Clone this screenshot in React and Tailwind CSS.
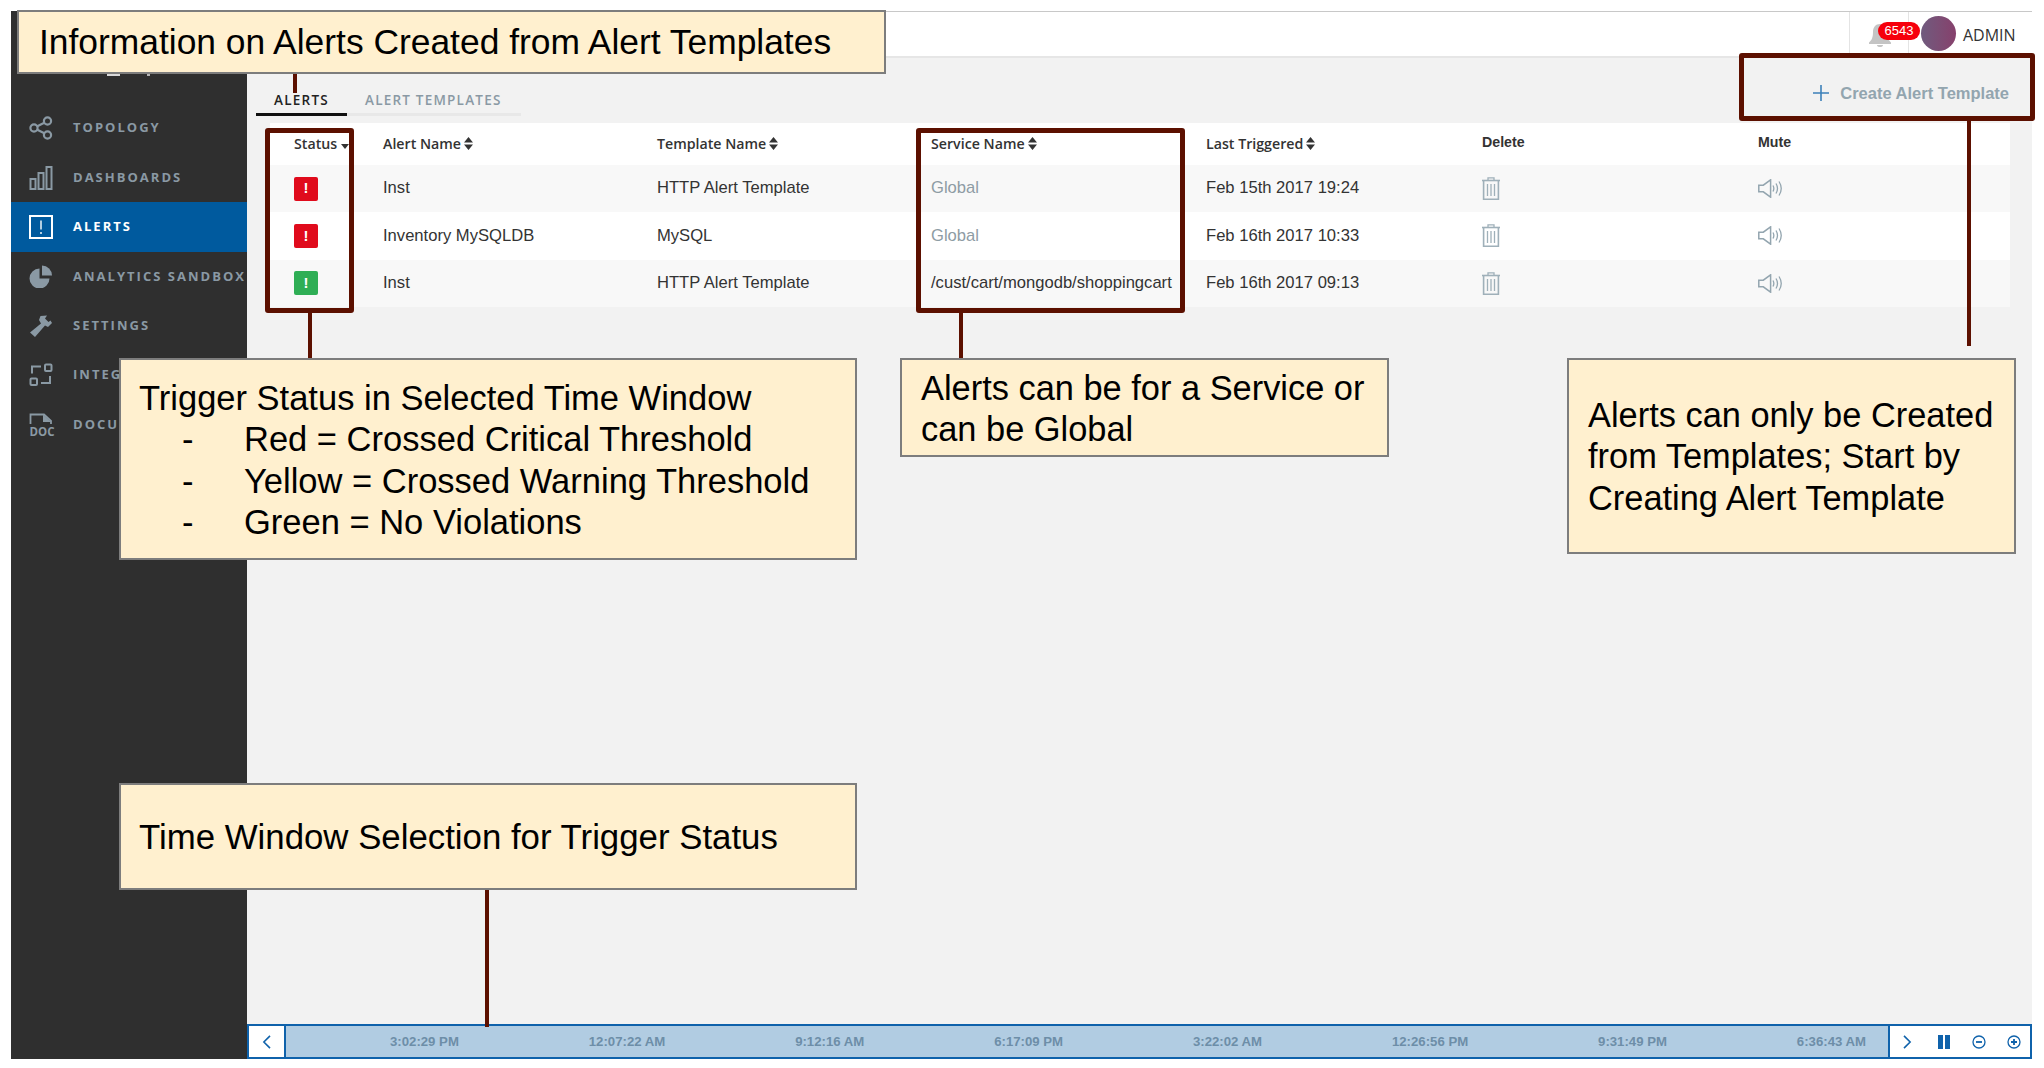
const helv = "font-['Liberation_Sans',Arial,sans-serif]";
const open = "font-['Open_Sans',sans-serif]";

const TopologyIcon = () => (
  <svg viewBox="0 0 24 24" className="h-6 w-6" fill="none" stroke="currentColor" strokeWidth="2.2">
    <circle cx="5" cy="12" r="3.6" />
    <circle cx="18.5" cy="5" r="3.6" />
    <circle cx="18.5" cy="19" r="3.6" />
    <path d="M8.3 10.3 15.3 6.7M8.3 13.7l7 3.6" />
  </svg>
);
const BarsIcon = () => (
  <svg viewBox="0 0 24 24" className="h-6 w-6" fill="none" stroke="currentColor" strokeWidth="2">
    <rect x="1.5" y="13" width="5" height="10" />
    <rect x="9.5" y="7" width="5" height="16" />
    <rect x="17.5" y="1" width="5" height="22" />
  </svg>
);
const AlertSquareIcon = () => (
  <svg viewBox="0 0 24 24" className="h-6 w-6" fill="none" stroke="currentColor">
    <rect x="1" y="1" width="22" height="22" strokeWidth="2" />
    <path d="M12 5.5v9M12 17v2" strokeWidth="1.4" />
  </svg>
);
const PieIcon = () => (
  <svg viewBox="0 0 24 24" className="h-6 w-6" fill="currentColor">
    <path d="M10.5 4.5v10h10a10 10 0 1 1-10-10z" />
    <path d="M13 1.5a10 10 0 0 1 10 10H13z" />
  </svg>
);
const WrenchIcon = () => (
  <svg viewBox="0 0 24 24" className="h-6 w-6" fill="currentColor">
    <path d="M11.5 2 18 1.5l-2 3 3.5 3.5 2-1.5L23 9l-4 4-3-1.5-10 11.5-5-4.5L12 9.5 10 6z" />
  </svg>
);
const IntegrationsIcon = () => (
  <svg viewBox="0 0 24 24" className="h-6 w-6" fill="none" stroke="currentColor" strokeWidth="2">
    <rect x="16" y="1.5" width="6.5" height="6.5" rx="1" />
    <rect x="1.5" y="15.5" width="6.5" height="6.5" rx="1" />
    <path d="M12 3.5H3v7M12 20h9v-7" />
  </svg>
);
const DocIcon = () => (
  <svg viewBox="0 0 24 24" className="h-6 w-6 overflow-visible" fill="none" stroke="currentColor">
    <path d="M1.5 11V1.500H15L22 8v3" strokeWidth="1.8" />
    <path d="M14 1.500 22 9h-8z" fill="currentColor" stroke="none" />
    <text x="0.5" y="23" fontSize="11.5" fontWeight="700" fill="currentColor" stroke="none" fontFamily="'Open Sans',sans-serif">DOC</text>
  </svg>
);

const navItems = [
  { label: 'TOPOLOGY', icon: TopologyIcon },
  { label: 'DASHBOARDS', icon: BarsIcon },
  { label: 'ALERTS', icon: AlertSquareIcon, active: true },
  { label: 'ANALYTICS SANDBOX', icon: PieIcon },
  { label: 'SETTINGS', icon: WrenchIcon },
  { label: 'INTEG', icon: IntegrationsIcon },
  { label: 'DOCU', icon: DocIcon },
];

const rows = [
  { color: 'bg-[#e00b1c]', name: 'Inst', template: 'HTTP Alert Template', service: 'Global', muted: true, time: 'Feb 15th 2017 19:24', bg: 'bg-[#f8f8f8]' },
  { color: 'bg-[#e00b1c]', name: 'Inventory MySQLDB', template: 'MySQL', service: 'Global', muted: true, time: 'Feb 16th 2017 10:33', bg: 'bg-white' },
  { color: 'bg-[#2fae55]', name: 'Inst', template: 'HTTP Alert Template', service: '/cust/cart/mongodb/shoppingcart', time: 'Feb 16th 2017 09:13', bg: 'bg-[#f8f8f8]' },
];

const times = ['3:02:29 PM', '12:07:22 AM', '9:12:16 AM', '6:17:09 PM', '3:22:02 AM', '12:26:56 PM', '9:31:49 PM', '6:36:43 AM'];

const columns = 'grid grid-cols-[89px_274px_274px_275px_276px_276px_1fr] items-center pl-[24px]';

const SortIcon = () => (
  <svg viewBox="0 0 9 13" className="ml-[3px] inline-block h-[13px] w-[9px] text-[#333]" fill="currentColor">
    <path d="M4.500 0 9 5.500H0zM4.500 13 0 7.500h9z" />
  </svg>
);

const TrashIcon = () => (
  <svg viewBox="0 0 18 23" className="h-[23px] w-[18px] text-[#9fb0b9]" fill="none" stroke="currentColor" strokeWidth="1.3">
    <path d="M0 3.500h18" strokeWidth="1.6" />
    <path d="M6 3V.8h6V3" />
    <path d="M1.600 3.500v18.700h14.800V3.500" strokeWidth="1.6" />
    <path d="M5.500 7v12M9 7v12M12.500 7v12" />
  </svg>
);

const SpeakerIcon = () => (
  <svg viewBox="0 0 24 19" className="h-[19px] w-[24px] text-[#93a5af]" fill="none" stroke="currentColor" strokeWidth="1.5">
    <path d="M.8 6.200h4.500L12.600.8v17.400l-7.300-5.400H.8z" />
    <path d="M15 6.500c1 1.800 1 4.200 0 6M18 4.500c1.800 3 1.800 7 0 10M21 2.500c2.700 4.200 2.700 9.800 0 14" strokeWidth="1.3" />
  </svg>
);

const callout = `absolute border-2 border-[#7d7d7d] bg-[#fff0cf] text-black ${helv}`;
const marker = 'absolute border-[5px] border-[#5c1000] rounded-[3px]';
const leader = 'absolute w-[4px] bg-[#5c1000]';

export default function App() {
  return (
    <div className={`relative h-[1068px] w-[2044px] overflow-hidden bg-white ${helv}`}>
      <div className="flex h-[1059px] w-[2032px] pl-[11px] pt-[11px]">
        {/* Sidebar */}
        <aside className={`w-[236px] shrink-0 bg-[#2f2f2f] pt-[92.500px] ${open}`}>
          {navItems.map((item) => (
            <div
              key={item.label}
              className={`flex h-[49.400px] items-center overflow-hidden whitespace-nowrap pl-[18px] ${item.active ? 'bg-[#005a9e] text-white' : 'text-[#8a99a4]'}`}
            >
              <item.icon />
              <span className="ml-[20px] text-[13px] font-bold tracking-[0.155em]">{item.label}</span>
            </div>
          ))}
        </aside>

        <div className="flex min-w-0 flex-1 flex-col">
          {/* Top bar */}
          <header className="flex h-[47px] shrink-0 items-stretch justify-end border-b-2 border-t border-b-[#e6e6e6] border-t-[#c8c8c8] bg-white">
            <div className="flex w-[59px] border-l border-[#e4e4e4]">
              <svg viewBox="0 0 24 24" className="ml-[18px] mt-[11px] h-[24px] w-[24px] text-[#c4c4c4]" fill="currentColor">
                <path d="M12 1c4.500 0 7 3.500 7 8 0 5 1 8 4 10.500V21H1v-1.500C4 17 5 14 5 9c0-4.500 2.500-8 7-8zM9 22h6c0 1.500-1.300 2-3 2s-3-.5-3-2z" />
              </svg>
            </div>
            <div className="relative flex w-[124px] items-center border-l border-[#e4e4e4]">
              <span className={`absolute -left-[31px] top-[10px] flex h-[18px] w-[42px] items-center justify-center rounded-[9px] bg-[#f6000c] text-[13px] text-white ${helv}`}>6543</span>
              <div className="relative z-10 -mt-[1px] ml-[12px] h-[35px] w-[35px] rounded-full bg-gradient-to-r from-[#6f5a7e] to-[#86406c]" />
              <span className={`ml-[7px] pt-[2px] text-[16px] text-[#333] ${open}`}>ADMIN</span>
            </div>
          </header>

          {/* Main */}
          <main className="min-h-0 flex-1 bg-[#f2f2f2] pr-[22px]">
            <div className="flex h-[65px] justify-between">
              <div className={`ml-[9px] mt-[11px] flex h-[47px] w-[265px] border-b-[3px] border-[#e8e8e8] text-[13.500px] font-semibold tracking-[0.09em] ${open}`}>
                <div className="-mb-[3px] flex w-[91px] justify-center border-b-[3px] border-[#111] pt-[21px] text-[#222]">ALERTS</div>
                <div className="ml-[18px] pt-[21px] text-[#8a99a4]">ALERT TEMPLATES</div>
              </div>
              <div className="mr-[1px] mt-[26px] flex h-[18px] items-center text-[16.500px] font-bold text-[#93a5af]">
                <svg viewBox="0 0 16 16" className="mr-[11px] h-[16px] w-[16px] text-[#3c80b9]" fill="none" stroke="currentColor" strokeWidth="1.6">
                  <path d="M8 0v16M0 8h16" />
                </svg>
                Create Alert Template
              </div>
            </div>

            <div className="ml-[23px] text-[16.600px] text-[#333]">
              <div className={`${columns} h-[42px] bg-white text-[14.200px] font-semibold text-[#333] ${open}`}>
                <div className="flex items-center whitespace-nowrap">
                  Status
                  <svg viewBox="0 0 8 5" className="ml-[4px] mt-[5px] h-[5px] w-[8px]" fill="currentColor"><path d="M0 0h8L4 5z" /></svg>
                </div>
                <div className="flex items-center">Alert Name<SortIcon /></div>
                <div className="flex items-center">Template Name<SortIcon /></div>
                <div className="flex items-center">Service Name<SortIcon /></div>
                <div className="flex items-center">Last Triggered<SortIcon /></div>
                <div className={`${helv} pb-[2px] font-bold`}>Delete</div>
                <div className={`${helv} pb-[2px] font-bold`}>Mute</div>
              </div>
              {rows.map((row, i) => (
                <div key={i} className={`${columns} h-[47.300px] ${row.bg}`}>
                  <div className={`flex h-[24px] w-[24px] items-center justify-center rounded-[2px] text-[15px] font-bold text-white ${row.color}`}>!</div>
                  <div>{row.name}</div>
                  <div>{row.template}</div>
                  <div className={`whitespace-nowrap ${row.muted ? 'text-[#8e9ca4]' : ''}`}>{row.service}</div>
                  <div>{row.time}</div>
                  <div><TrashIcon /></div>
                  <div><SpeakerIcon /></div>
                </div>
              ))}
            </div>
          </main>

          {/* Time bar */}
          <footer className="flex h-[35px] shrink-0 border-2 border-[#0f62ab] bg-white text-[#0f62ab]">
            <div className="flex w-[37px] shrink-0 items-center justify-center border-r-2 border-[#0f62ab]">
              <svg viewBox="0 0 10 16" className="h-[14px] w-[9px]" fill="none" stroke="currentColor" strokeWidth="1.800"><path d="M9 1 2 8l7 7" /></svg>
            </div>
            <div className="flex min-w-0 flex-1 items-center justify-between bg-[#b1cce2] pl-[104px] pr-[22px] text-[13.200px] font-bold text-[#6d8ea8]">
              {times.map((t) => (
                <span key={t}>{t}</span>
              ))}
            </div>
            <div className="flex w-[142px] shrink-0 items-center border-l-2 border-[#0f62ab] pl-[13px]">
              <svg viewBox="0 0 10 16" className="h-[14px] w-[9px]" fill="none" stroke="currentColor" strokeWidth="1.800"><path d="M1 1l7 7-7 7" /></svg>
              <svg viewBox="0 0 12 14" className="ml-[26px] h-[14px] w-[12px]" fill="currentColor"><path d="M0 0h5v14H0zM7 0h5v14H7z" /></svg>
              <svg viewBox="0 0 14 14" className="ml-[22px] h-[14px] w-[14px]" fill="none" stroke="currentColor" strokeWidth="1.300"><circle cx="7" cy="7" r="6" /><path d="M4 7h6" strokeWidth="1.800" /></svg>
              <svg viewBox="0 0 14 14" className="ml-[21px] h-[14px] w-[14px]" fill="none" stroke="currentColor" strokeWidth="1.300"><circle cx="7" cy="7" r="6" /><path d="M4 7h6M7 4v6" strokeWidth="1.800" /></svg>
            </div>
          </footer>
        </div>
      </div>

      {/* Annotations over the screenshot */}
      <div className={`${leader} left-[293px] top-[73px] h-[20px]`} />
      <div className={`${marker} left-[265px] top-[128px] h-[185px] w-[89px]`} />
      <div className={`${leader} left-[308px] top-[312px] h-[47px]`} />
      <div className={`${marker} left-[916px] top-[128px] h-[185px] w-[269px]`} />
      <div className={`${leader} left-[959px] top-[312px] h-[47px]`} />
      <div className={`${marker} left-[1739px] top-[53px] h-[68px] w-[296px]`} />
      <div className={`${leader} left-[1967px] top-[120px] h-[226px]`} />
      <div className={`${leader} left-[485px] top-[888px] h-[139px]`} />

      <div className={`${callout} left-[17px] top-[10px] flex h-[64px] w-[869px] items-center pl-[20px] pt-[2px] text-[35.400px]`}>
        Information on Alerts Created from Alert Templates
      </div>

      <div className={`${callout} left-[119px] top-[358px] h-[202px] w-[738px] pl-[18px] pt-[18px] text-[34.500px] leading-[41.300px]`}>
        <div>Trigger Status in Selected Time Window</div>
        <div className="flex"><span className="w-[105px] pl-[43px]">-</span>Red = Crossed Critical Threshold</div>
        <div className="flex"><span className="w-[105px] pl-[43px]">-</span>Yellow = Crossed Warning Threshold</div>
        <div className="flex"><span className="w-[105px] pl-[43px]">-</span>Green = No Violations</div>
      </div>

      <div className={`${callout} left-[900px] top-[358px] h-[99px] w-[489px] pl-[19px] pt-[8px] text-[34.400px] leading-[41.300px]`}>
        Alerts can be for a Service or<br />can be Global
      </div>

      <div className={`${callout} left-[1567px] top-[358px] h-[196px] w-[449px] pl-[19px] pt-[35px] text-[34.400px] leading-[41.300px]`}>
        Alerts can only be Created<br />from Templates; Start by<br />Creating Alert Template
      </div>

      <div className={`${callout} left-[119px] top-[783px] flex h-[107px] w-[738px] items-center pl-[18px] pt-[2px] text-[34.800px]`}>
        Time Window Selection for Trigger Status
      </div>

      {/* Bits of the logo showing below the title box */}
      <div className="absolute left-[107px] top-[74px] h-[2px] w-[13px] bg-[#d9d9d9]" />
      <div className="absolute left-[147px] top-[74px] h-[2px] w-[3px] bg-[#b5b5b5]" />
    </div>
  );
}
